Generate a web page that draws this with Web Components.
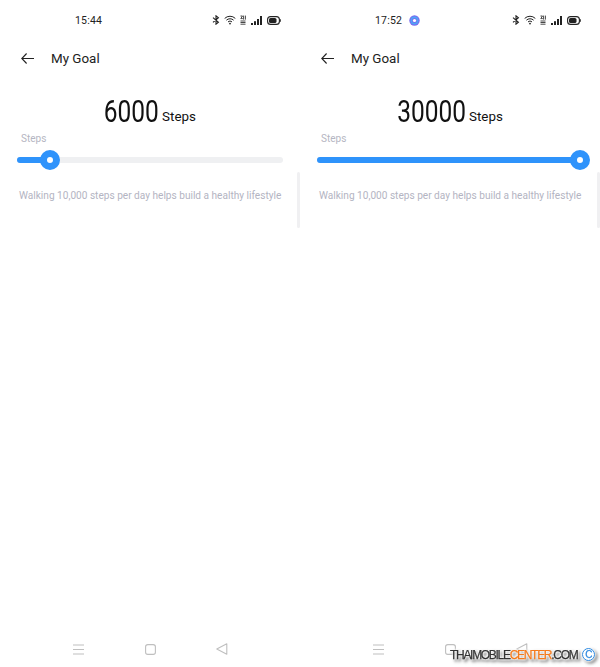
<!DOCTYPE html>
<html>
<head>
<meta charset="utf-8">
<title>My Goal</title>
<style>
    html, body { margin: 0; padding: 0; background: #fff; }
    body { width: 600px; height: 667px; overflow: hidden; position: relative; font-family: Roboto, "Liberation Sans", sans-serif; }
    .screens { display: grid; grid-template-columns: 300px 300px; height: 667px; }
</style>
</head>
<body>
<div class="screens">
    <goal-screen time="15:44" value="6000" percent="12.4"></goal-screen>
    <goal-screen time="17:52" value="30000" percent="98.9" badge></goal-screen>
</div>
<site-mark></site-mark>

<script>
class StatusBar extends HTMLElement {
    constructor() {
        super();
        this.attachShadow({ mode: 'open' });
    }

    connectedCallback() {
        const badge = this.hasAttribute('badge') ? `
            <svg class="badge" width="11" height="11" viewBox="0 0 11 11">
                <circle cx="5.5" cy="5.5" r="5.2" fill="#7a6cf0"/>
                <circle cx="5.5" cy="5.5" r="3.2" fill="none" stroke="#4aa8f5" stroke-width="1.4"/>
                <circle cx="5.5" cy="5.5" r="1.6" fill="#fff"/>
            </svg>` : '';
        this.shadowRoot.innerHTML = `
            <style>
                :host { display: flex; align-items: center; height: 40px; padding: 0 19px 0 75px; color: #222; font: 400 10.5px Roboto, sans-serif; letter-spacing: .2px; }
                .time { width: 34px; }
                .icons { margin-left: auto; display: flex; align-items: center; }
                svg { display: block; }
            </style>
            <span class="time">${this.getAttribute('time')}</span>${badge}
            <div class="icons">
                <svg width="8" height="10" viewBox="0 0 8 10" fill="none" stroke="#222" stroke-width="1.1"><path d="M1 2.7 6.4 7.3 4 9.2V.8l2.4 1.9L1 7.3"/></svg>
                <svg style="margin-left:4px" width="12" height="10" viewBox="0 0 12 10" fill="none" stroke="#222" stroke-width="1"><path d="M.7 3.4a7.6 7.6 0 0 1 10.6 0M2.4 5.2a5.2 5.2 0 0 1 7.2 0M4 6.9a2.9 2.9 0 0 1 4 0"/><circle cx="6" cy="8.6" r=".9" fill="#222" stroke="none"/></svg>
                <svg style="margin-left:4px" width="6" height="10" viewBox="0 0 6 10" fill="none" stroke="#333" stroke-width=".9"><path d="M.5 1h2L.8 3.6h2M3.6 .6v4M5.4 .6v4M.5 6h5M.5 7.5h5M.5 9.2h5"/></svg>
                <svg style="margin-left:5px" width="11" height="9" viewBox="0 0 11 9" fill="#222"><rect x="0" y="7" width="2" height="2"/><rect x="3" y="5.2" width="2" height="3.8"/><rect x="6" y="3" width="2" height="6"/><rect x="9" y="0" width="2" height="9"/></svg>
                <svg style="margin-left:5px" width="14" height="9" viewBox="0 0 14 9"><rect x=".6" y=".6" width="11.8" height="7.8" rx="3" fill="none" stroke="#222" stroke-width="1.1"/><rect x="2" y="2" width="7.5" height="5" rx="1.6" fill="#222"/><path d="M13.2 3v3a1.6 1.6 0 0 0 0-3z" fill="#222"/></svg>
            </div>
        `;
    }
}

class TitleBar extends HTMLElement {
    constructor() {
        super();
        this.attachShadow({ mode: 'open' });
    }

    connectedCallback() {
        this.shadowRoot.innerHTML = `
            <style>
                :host { display: flex; align-items: center; height: 37px; padding-left: 21px; color: #222; font: 400 13.4px Roboto, sans-serif; }
                svg { display: block; margin-right: 17px; }
            </style>
            <svg width="13" height="11" viewBox="0 0 13 11" fill="none" stroke="#222" stroke-width="1.1"><path d="M13 5.5H1M5.6 .5 .8 5.5l4.8 5"/></svg>
            <slot></slot>
        `;
    }
}

class StepSlider extends HTMLElement {
    constructor() {
        super();
        this.attachShadow({ mode: 'open' });
    }

    connectedCallback() {
        const percent = this.getAttribute('percent');
        this.shadowRoot.innerHTML = `
            <style>
                :host { display: block; position: relative; height: 20px; margin: 0 17px; }
                .track { position: absolute; left: 0; right: 0; top: 7px; height: 6px; border-radius: 3px; background: #eff0f2; }
                .fill { height: 100%; width: ${percent}%; border-radius: 3px; background: #2f93fb; }
                .thumb { position: absolute; top: 0; left: ${percent}%; width: 6px; height: 6px; border: 7px solid #2f93fb; border-radius: 50%; background: #fff; transform: translateX(-10px); }
            </style>
            <div class="track"><div class="fill"></div></div>
            <div class="thumb"></div>
        `;
    }
}

class NavBar extends HTMLElement {
    constructor() {
        super();
        this.attachShadow({ mode: 'open' });
    }

    connectedCallback() {
        this.shadowRoot.innerHTML = `
            <style>
                :host { display: flex; align-items: center; height: 36px; padding: 0 0 0 73px; }
                svg { display: block; }
            </style>
            <svg width="11" height="11" viewBox="0 0 11 11" stroke="#bfbfbf" stroke-width="1.1"><path d="M0 1h11M0 5.5h11M0 10h11"/></svg>
            <svg style="margin-left:61px" width="11" height="11" viewBox="0 0 11 11" fill="none" stroke="#bfbfbf" stroke-width="1.1"><rect x=".6" y=".6" width="9.8" height="9.8" rx="2.2"/></svg>
            <svg style="margin-left:60px" width="12" height="12" viewBox="0 0 12 12" fill="none" stroke="#bfbfbf" stroke-width="1.1" stroke-linejoin="round"><path d="M10.8 .8 .8 6l10 5.2z"/></svg>
        `;
    }
}

class GoalScreen extends HTMLElement {
    constructor() {
        super();
        this.attachShadow({ mode: 'open' });
    }

    connectedCallback() {
        const badge = this.hasAttribute('badge') ? 'badge' : '';
        const value = this.getAttribute('value');
        this.shadowRoot.innerHTML = `
            <style>
                :host { display: flex; flex-direction: column; position: relative; height: 667px; background: #fff; }
                .goal { display: flex; justify-content: center; align-items: baseline; gap: 3px; height: 34px; margin-top: 18px; color: #111; font: 400 13.4px Roboto, sans-serif; line-height: 34px; }
                /* the digit face in the reference is narrow, so Roboto is squeezed */
                .num { display: inline-block; font: 400 31px Roboto, sans-serif; line-height: 34px; transform: scaleX(.79); transform-origin: right center; margin-left: calc(${value.length} * -3.65px); }
                .unit { position: relative; top: -1px; }
                .label { margin: 3px 0 4px 21px; height: 14px; line-height: 14px; color: #b5b6c2; font-size: 10px; }
                .hint { margin: 19px 0 0 19px; height: 14px; line-height: 14px; color: #b3b4c2; font-size: 10.1px; white-space: nowrap; }
                .scroll { position: absolute; right: 0; top: 172px; width: 3px; height: 56px; border-radius: 1.5px; background: #f0f0f2; }
                nav-bar { margin-top: auto; }
            </style>
            <status-bar time="${this.getAttribute('time')}" ${badge}></status-bar>
            <title-bar>My Goal</title-bar>
            <div class="goal"><span class="num">${value}</span><span class="unit">Steps</span></div>
            <div class="label">Steps</div>
            <step-slider percent="${this.getAttribute('percent')}"></step-slider>
            <div class="hint">Walking 10,000 steps per day helps build a healthy lifestyle</div>
            <div class="scroll"></div>
            <nav-bar></nav-bar>
        `;
    }
}

class SiteMark extends HTMLElement {
    constructor() {
        super();
        this.attachShadow({ mode: 'open' });
    }

    connectedCallback() {
        this.shadowRoot.innerHTML = `
            <style>
                :host { position: absolute; left: 450px; top: 647px; display: flex; align-items: center; height: 15px; color: #333; font: 400 12px "Liberation Sans", sans-serif; letter-spacing: -1.3px; -webkit-text-stroke: .25px currentColor; filter: drop-shadow(0 0 1px #fff) drop-shadow(0 0 1px #fff) drop-shadow(2px 2px 1px rgba(0,0,0,.4)); }
                b { font-weight: 400; color: #f47a1c; }
                .c { display: flex; align-items: center; justify-content: center; box-sizing: border-box; width: 13px; height: 13px; margin-left: 5px; border: 1.3px solid #2f8ae0; border-radius: 50%; background: #fff; color: #2f8ae0; font-size: 10px; letter-spacing: 0; }
            </style>
            <span>THAIMOBILE<b>CENTER</b>.COM</span><span class="c">C</span>
        `;
    }
}

customElements.define('status-bar', StatusBar);
customElements.define('title-bar', TitleBar);
customElements.define('step-slider', StepSlider);
customElements.define('nav-bar', NavBar);
customElements.define('goal-screen', GoalScreen);
customElements.define('site-mark', SiteMark);
</script>
</body>
</html>
